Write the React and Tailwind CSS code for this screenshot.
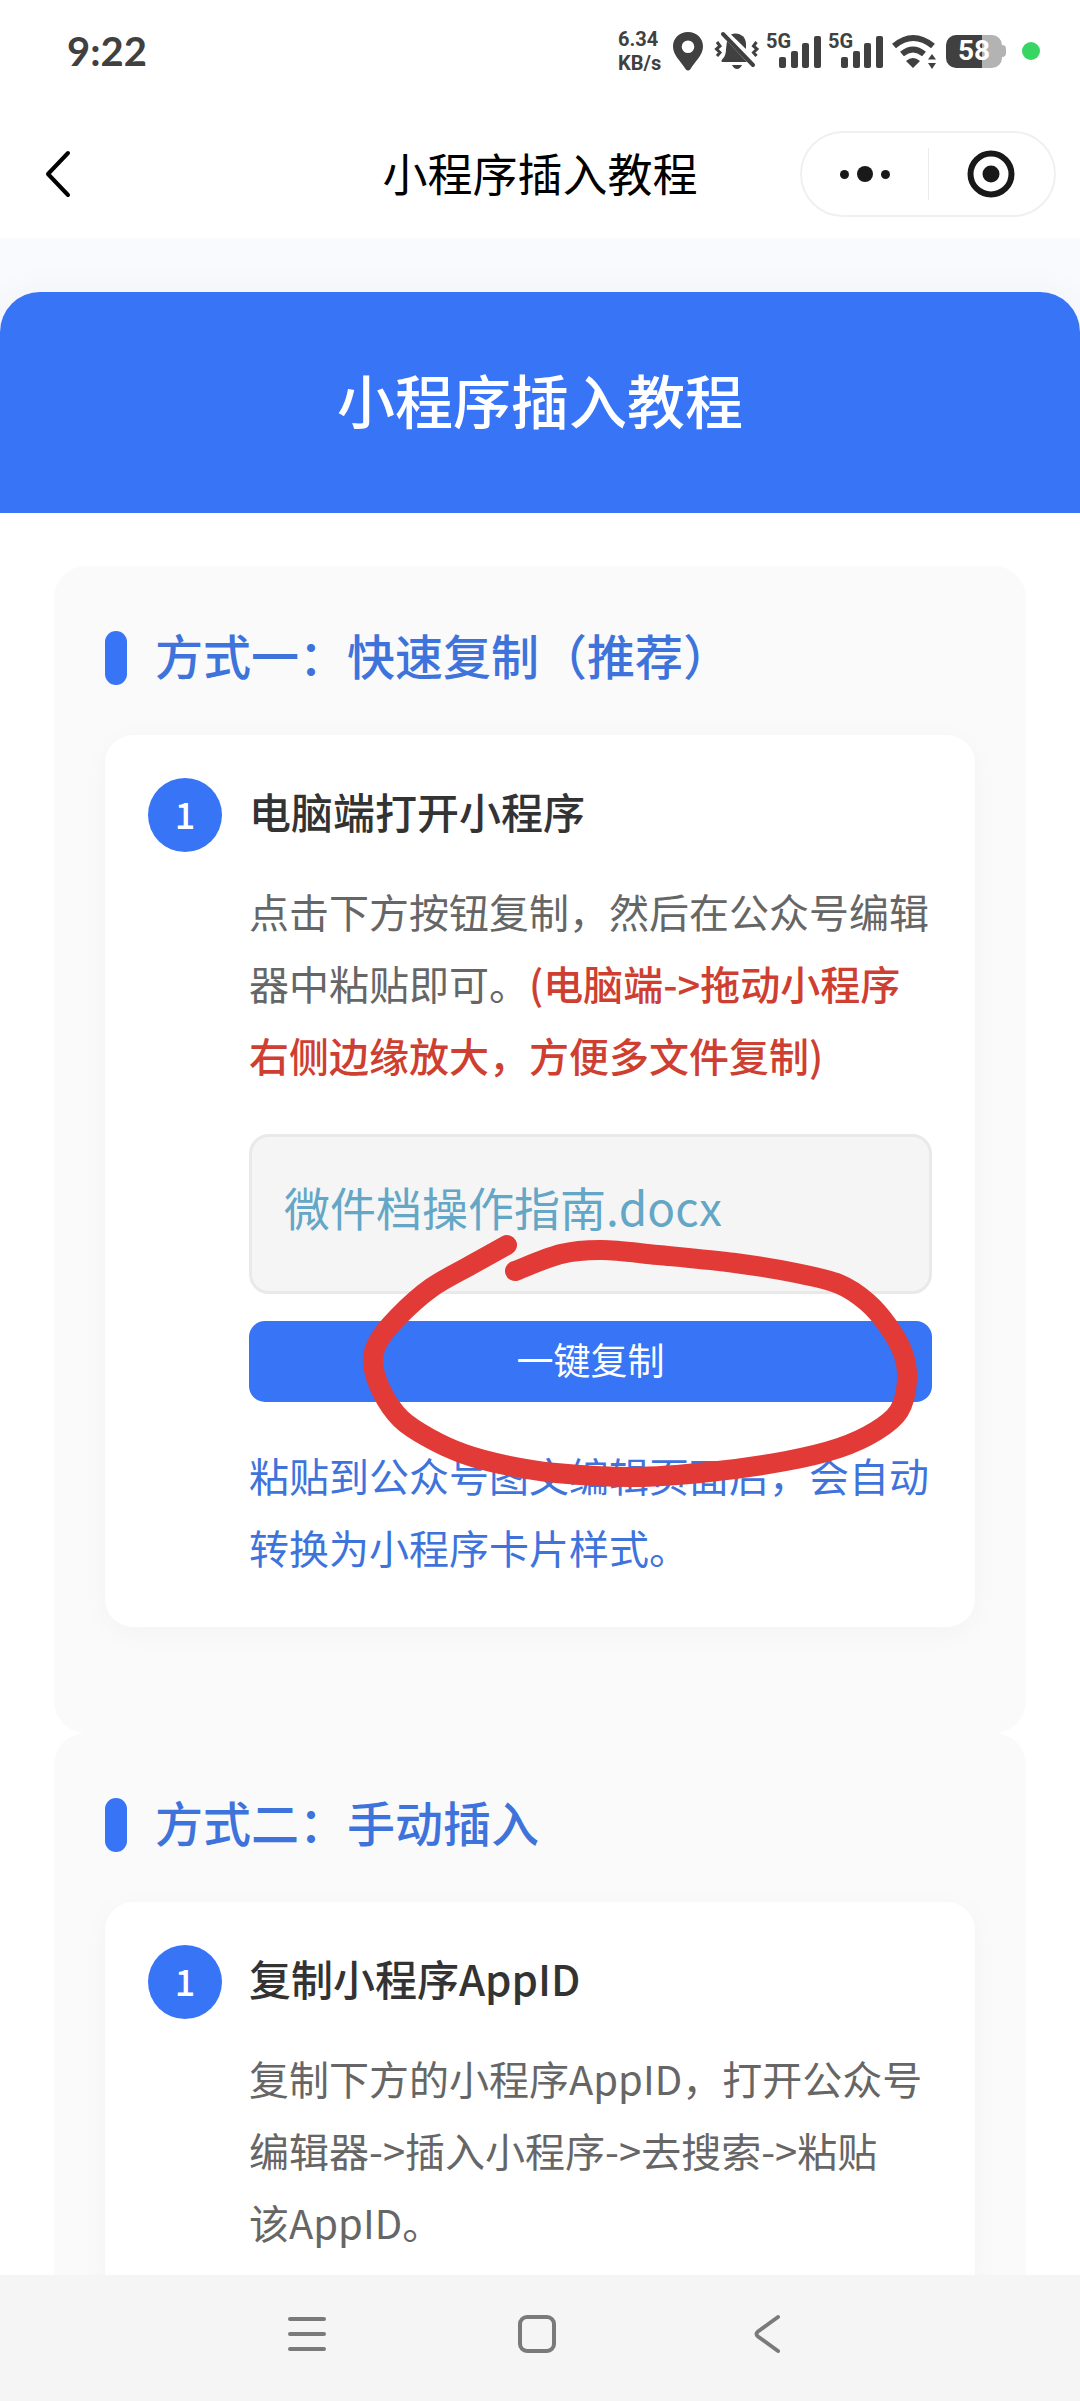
const strokePoints = [
  [258, 111], [222, 131], [182, 154], [149, 183], [129, 208], [124, 229], [133, 258],
  [152, 285], [180, 304], [215, 320], [256, 331], [307, 339], [384, 343], [460, 338],
  [537, 327], [590, 314], [627, 297], [650, 277], [658, 247], [654, 219], [639, 192],
  [618, 168], [590, 150], [547, 139], [486, 129], [409, 121], [353, 116], [312, 120], [266, 137],
];

function smoothPath(points) {
  let d = `M${points[0][0]} ${points[0][1]}`;
  for (let i = 0; i < points.length - 1; i++) {
    const before = points[i - 1] || points[i];
    const from = points[i];
    const to = points[i + 1];
    const after = points[i + 2] || to;
    const c1 = [from[0] + (to[0] - before[0]) / 6, from[1] + (to[1] - before[1]) / 6];
    const c2 = [to[0] - (after[0] - from[0]) / 6, to[1] - (after[1] - from[1]) / 6];
    d += ` C${c1[0]} ${c1[1]} ${c2[0]} ${c2[1]} ${to[0]} ${to[1]}`;
  }
  return d;
}

function Signal() {
  return (
    <div className="relative h-10 w-14">
      <span className="absolute left-0 top-0 text-[20px] leading-5 font-bold">5G</span>
      <svg className="block h-10 w-14" viewBox="0 0 56 40" fill="currentColor" aria-hidden="true">
        <rect x="13" y="26" width="7" height="11" rx="2" />
        <rect x="25" y="20" width="7" height="17" rx="2" />
        <rect x="36" y="12" width="7" height="25" rx="2" />
        <rect x="48" y="5" width="7" height="32" rx="2" />
      </svg>
    </div>
  );
}

function StatusBar() {
  return (
    <div className="flex h-[110px] shrink-0 items-center justify-between pr-10 pb-2 pl-[67px] font-['Roboto',sans-serif] text-[#404040]">
      <time className="font-['Lato',sans-serif] text-[40px] leading-none font-bold">9:22</time>
      <div className="flex items-center">
        <div className="w-11 text-[20px] leading-6 font-bold whitespace-nowrap">
          <div>6.34</div>
          <div>KB/s</div>
        </div>
        <svg className="ml-2.5 h-10 w-8" viewBox="0 0 32 40" fill="currentColor" aria-hidden="true">
          <path fillRule="evenodd" d="M16 1C7 1 1 7.500 1 15.500C1 24 8.500 30 13.500 38Q16 41 18.500 38C23.500 30 31 24 31 15.500C31 7.500 25 1 16 1ZM16 9.500a6.300 6.300 0 1 1 0 12.600a6.300 6.300 0 0 1 0-12.600Z" />
        </svg>
        <svg className="ml-2.5 h-10 w-[46px]" viewBox="0 0 46 40" fill="currentColor" aria-hidden="true">
          <path d="M17 3.500C24 .5 32 5 32 13V18Z" />
          <path d="M13 10L33 31H9Q6 31 8.500 28Q12 25 12 18Z" />
          <path d="M18 34H28Q26 38 23 38Q20 38 18 34Z" />
          <path d="M9 3L39 34" stroke="currentColor" strokeWidth="4" strokeLinecap="round" />
          <path d="M3 11L6 15L2.500 18L6 21.500L3 25M42.500 11L39.500 15L43 18L39.500 21.500L42.500 25" fill="none" stroke="currentColor" strokeWidth="3" />
        </svg>
        <div className="ml-1.5 flex gap-1.5">
          <Signal />
          <Signal />
        </div>
        <svg className="ml-2 h-10 w-[46px]" viewBox="0 0 46 40" aria-hidden="true">
          <g fill="none" stroke="currentColor" strokeWidth="6">
            <path d="M2 15Q21 -1 41 15" />
            <path d="M10 23Q21 14 32 23" />
          </g>
          <path d="M14 30Q21 24 28 30L21 37ZM36 28.500L40 23L44 28.500ZM36 32L40 38L44 32Z" fill="currentColor" />
        </svg>
        <div className="ml-2 flex items-center">
          <div className="flex h-[33px] w-14 items-center justify-center rounded-[10px] bg-linear-to-r from-[#404040] from-64% to-[#b3b3b3] to-64% text-[28px] leading-none font-bold text-white">
            58
          </div>
          <div className="h-3 w-1 rounded-r-sm bg-[#b3b3b3]" />
        </div>
        <div className="ml-4 size-[18px] rounded-full bg-[#37d663]" />
      </div>
    </div>
  );
}

function NavBar() {
  return (
    <header className="grid h-32 shrink-0 grid-cols-[1fr_auto_1fr] items-center px-6">
      <button type="button" aria-label="返回" className="ml-[18px] w-8">
        <svg className="h-12 w-8" viewBox="0 0 32 48" fill="none" stroke="#000" strokeWidth="4" strokeLinecap="round" strokeLinejoin="round">
          <path d="M26 3L6 24L26 45" />
        </svg>
      </button>
      <h1 className="pb-1 text-[45px] leading-none text-black">小程序插入教程</h1>
      <div className="flex h-[86px] w-64 items-center justify-self-end rounded-full border-2 border-[#f0f0f0]">
        <button type="button" aria-label="更多" className="flex flex-1 items-center justify-center gap-2">
          <span className="size-[9px] rounded-full bg-[#191919]" />
          <span className="size-4 rounded-full bg-[#191919]" />
          <span className="size-[9px] rounded-full bg-[#191919]" />
        </button>
        <span className="h-[52px] w-px bg-[#ebebeb]" />
        <button type="button" aria-label="关闭" className="flex flex-1 items-center justify-center">
          <svg className="size-12" viewBox="0 0 48 48">
            <circle cx="24" cy="24" r="20.5" fill="none" stroke="#191919" strokeWidth="6" />
            <circle cx="24" cy="24" r="8.500" fill="#191919" />
          </svg>
        </button>
      </div>
    </header>
  );
}

function Section({ title, children }) {
  return (
    <section className="rounded-[32px] bg-[#fafafa] px-[51px] pt-[65px] pb-[106px]">
      <div className="flex h-[54px] items-center gap-7">
        <span className="h-[54px] w-[22px] rounded-full bg-[#3874f6]" />
        <h3 className="pb-2 text-[48px] leading-[54px] font-medium text-[#3f73dc]">{title}</h3>
      </div>
      {children}
    </section>
  );
}

function Step({ number, title, children }) {
  return (
    <article className="mt-[50px] flex gap-[27px] rounded-[28px] bg-white p-[43px] pb-10 shadow-[0_6px_30px_rgba(0,0,0,0.03)]">
      <span className="flex size-[74px] shrink-0 items-center justify-center rounded-full bg-[#3874f6] pb-1 text-[36px] leading-none font-medium text-white">
        {number}
      </span>
      <div className="min-w-0 flex-1">
        <h4 className="text-[42px] leading-[66px] font-medium text-[#333]">{title}</h4>
        {children}
      </div>
    </article>
  );
}

function SystemNav() {
  return (
    <nav className="flex h-[126px] shrink-0 items-center justify-center bg-[#f5f5f5] pr-1.5 pb-2 text-[#7a7a7a]">
      <button type="button" aria-label="最近任务" className="flex w-[230px] justify-center">
        <svg className="size-10" viewBox="0 0 40 40" stroke="currentColor" strokeWidth="4" strokeLinecap="round">
          <path d="M3 5H37M3 20H37M3 35H37" />
        </svg>
      </button>
      <button type="button" aria-label="主屏幕" className="flex w-[230px] justify-center">
        <svg className="size-10" viewBox="0 0 40 40" fill="none" stroke="currentColor" strokeWidth="4">
          <rect x="3" y="3" width="34" height="34" rx="7" />
        </svg>
      </button>
      <button type="button" aria-label="返回上一页" className="flex w-[230px] justify-center">
        <svg className="size-10" viewBox="0 0 40 40" fill="none" stroke="currentColor" strokeWidth="4" strokeLinecap="round">
          <path d="M31 3L11 17.500Q8 20 11 22.500L31 37" />
        </svg>
      </button>
    </nav>
  );
}

export default function App() {
  return (
    <div className="flex h-screen flex-col bg-white font-['Noto_Sans_CJK_SC',sans-serif]">
      <StatusBar />
      <NavBar />
      <main className="min-h-0 flex-1 overflow-hidden bg-[#f8fafd] pt-[54px]">
        <div className="rounded-t-[40px] bg-white shadow-[0_0_40px_rgba(0,0,0,0.04)]">
          <div className="flex h-[221px] items-center justify-center rounded-t-[40px] bg-[#3874f6] pb-2">
            <h2 className="text-[58px] leading-none font-medium text-white">小程序插入教程</h2>
          </div>
          <div className="px-[54px] pt-[53px]">
            <Section title="方式一：快速复制（推荐）">
              <Step number="1" title="电脑端打开小程序">
                <p className="mt-[31px] text-[40px] leading-[72px] text-[#666]">
                  点击下方按钮复制，然后在公众号编辑器中粘贴即可。
                  <span className="font-medium text-[#cf3f31]">(电脑端-&gt;拖动小程序右侧边缘放大，方便多文件复制)</span>
                </p>
                <div className="relative mt-[43px]">
                  <div className="rounded-[20px] border-[3px] border-[#e9e9e9] bg-[#f5f5f5] px-8 pt-[34px] pb-[50px]">
                    <a href="#guide" className="block text-[46px] leading-[70px] text-[#64a6c6]">微件档操作指南.docx</a>
                  </div>
                  <button type="button" className="mt-[27px] block h-[81px] w-full rounded-2xl bg-[#3874f6] pb-1 text-[37px] leading-none text-white">
                    一键复制
                  </button>
                  <p className="mt-[37px] pb-1 text-[40px] leading-[72px] text-[#3f73dc]">
                    粘贴到公众号图文编辑页面后，会自动转换为小程序卡片样式。
                  </p>
                  <svg className="pointer-events-none absolute top-0 left-0 h-[360px] w-[681px] overflow-visible" viewBox="0 0 681 360" fill="none" aria-hidden="true">
                    <path d={smoothPath(strokePoints)} stroke="#e23b37" strokeWidth="20" strokeLinecap="round" strokeLinejoin="round" />
                  </svg>
                </div>
              </Step>
            </Section>
            <Section title="方式二：手动插入">
              <Step number="1" title="复制小程序AppID">
                <p className="mt-[31px] text-[40px] leading-[72px] text-[#666]">
                  复制下方的小程序AppID，打开公众号
                  <br />
                  编辑器-&gt;插入小程序-&gt;去搜索-&gt;粘贴
                  <br />
                  该AppID。
                </p>
              </Step>
            </Section>
          </div>
        </div>
      </main>
      <SystemNav />
    </div>
  );
}
